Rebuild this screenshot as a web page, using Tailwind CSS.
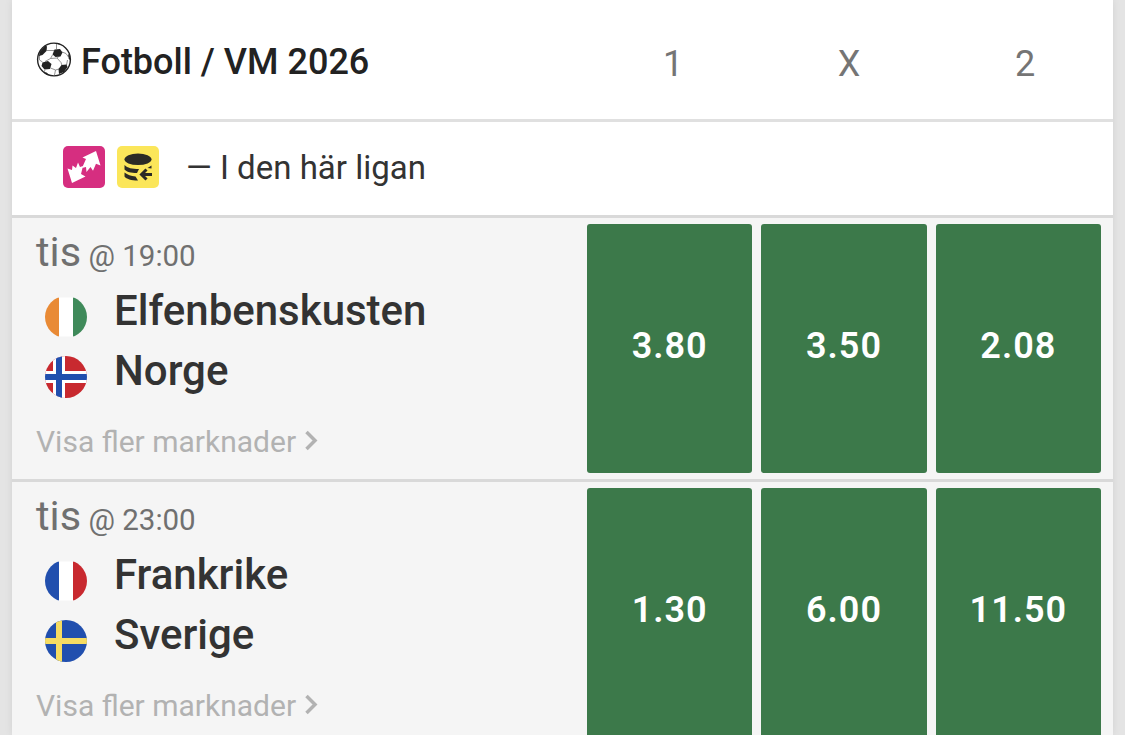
<!DOCTYPE html>
<html lang="sv">
<head>
    <meta charset="UTF-8" />
    <meta name="viewport" content="width=device-width, initial-scale=1.0" />
    <title>Fotboll / VM 2026</title>
    <script src="https://cdn.jsdelivr.net/npm/@tailwindcss/browser@4"></script>
</head>
<body class="bg-[#e4e4e4] font-['Roboto',sans-serif] overflow-hidden">
    <main class="mx-3 h-[735px] bg-white overflow-hidden shadow-[0_0_8px_rgba(0,0,0,0.08)]">
        <!-- League header -->
        <header class="flex items-center h-[122px] border-b-3 border-[#e0e0e0] pl-6">
            <svg class="w-9 h-9 shrink-0" viewBox="0 0 36 36">
                <circle cx="18" cy="17.500" r="16.400" fill="#fff" stroke="#222" stroke-width="1.400"/>
                <path fill="none" stroke="#777" stroke-width=".8" d="M20.500 7V2M10.500 8.500l8 0M16.500 13l-2 3.500-5.500 3M14.500 16.500l6.500-.500 2.500-2M21 16l4 4.500 1 3M14.500 26l5 2 3.500-1M26 10l4 1.500 2.500 3.500M3.500 13v5l3 2M30.500 23l1-5M9 28l-1 2M19.500 28l-1 5"/>
                <g fill="#222">
                    <path d="M16.500 12.500l2-5 5.500-.500 2.500 3.500-2 4-5 .500z"/>
                    <path d="M6.500 20.500l5.500-1.500 3.500 3-1.500 5-5.500.500-3-3.500z"/>
                    <path d="M22.500 27l3-4 5-.500 1 2.500-3.500 5-5 2z"/>
                    <path d="M9.500 3.500l1.500 1-.500 4.500-4 4-3.500 1 .5-4z"/>
                    <path d="M32 12l1.800 1.500.400 5-1.500-2z"/>
                    <path d="M18 1h5l1 1.500-3.500-.5z"/>
                    <path d="M7.500 30l3 .500 3.500 3-3-.500z"/>
                </g>
            </svg>
            <h1 class="ml-[9px] mt-1 text-4xl font-medium text-[#222]">Fotboll / VM 2026</h1>
            <div class="ml-auto mt-2 w-[528px] grid grid-cols-3 text-center text-4xl text-[#757575]">
                <span>1</span>
                <span>X</span>
                <span>2</span>
            </div>
        </header>

        <!-- Offers in this league -->
        <div class="flex items-center h-24 border-b-3 border-[#d9d9d9] pl-[51px]">
            <svg class="-mt-1 w-[42px] h-[42px]" viewBox="0 0 42 42">
                <rect width="42" height="42" rx="5" fill="#d62e80"/>
                <path fill="#fff" d="M19.500 11.500L33 5l4.500 14.500-4.500-1.800-3 7-2.500-3.700-4 5-.500-5-4 1 4-9z"/>
                <path fill="#fff" d="M4.500 22.500l4.500 1.500.500-4.500 3.500 2.500 2-5.500 2 4.500 3-1-2 8 4.500 2.500L9 37z"/>
            </svg>
            <svg class="-mt-1 ml-3 w-[42px] h-[42px]" viewBox="0 0 42 42">
                <rect width="42" height="42" rx="5" fill="#fbe65a"/>
                <g fill="#2b2a26">
                    <ellipse cx="21" cy="13.300" rx="13.500" ry="5.800"/>
                    <path d="M7.500 19c3 3 7.500 4 14.500 4l-2 4c-6 0-10.500-1-12.500-3.500z"/>
                    <path d="M7.500 26.500c3 2.500 6.500 3.500 11 4l2.500 4c-7 0-11.500-1.500-13.500-4z"/>
                    <path d="M30.500 22l4-2.500v3z"/>
                </g>
                <path d="M35 28.500H25M29.500 23.500l-5 5 5 5" fill="none" stroke="#2b2a26" stroke-width="3"/>
            </svg>
            <p class="-mt-0.5 ml-[27px] text-[33px] text-[#333]">— I den här ligan</p>
        </div>

        <!-- Event -->
        <section class="flex h-[264px] bg-[#f5f5f5] border-b-3 border-[#d9d9d9] pl-6 pr-3 pt-[3px]">
            <div class="w-[551px]">
                <p class="h-[60px] leading-[62px] text-[#707070] text-[29.500px]"><span class="text-[41.500px]">tis</span> @ 19:00</p>
                <div class="flex h-[60px] pl-[9px]">
                    <svg class="mt-[15px] w-[42px] h-[42px] rounded-full" viewBox="0 0 42 42">
                        <path fill="#e98a35" d="M0 1.500h14v39H0z"/>
                        <path fill="#fff" d="M14 1.500h14v39H14z"/>
                        <path fill="#3f8a5a" d="M28 1.500h14v39H28z"/>
                    </svg>
                    <span class="ml-[27px] text-[42px] leading-[60px] font-medium text-[#333]">Elfenbenskusten</span>
                </div>
                <div class="flex h-[60px] pl-[9px]">
                    <svg class="mt-[15px] w-[42px] h-[42px] rounded-full" viewBox="0 0 42 42">
                        <path fill="#c8292f" d="M0 0h42v42H0z"/>
                        <path fill="#fff" d="M8 0h12v42H8zM0 15h42v12H0z"/>
                        <path fill="#214fae" d="M11 0h6v42h-6zM0 18h42v6H0z"/>
                    </svg>
                    <span class="ml-[27px] text-[42px] leading-[60px] font-medium text-[#333]">Norge</span>
                </div>
                <a href="#" class="flex items-center h-20 text-[30px] text-[#b2b2b2]">Visa fler marknader
                    <svg class="ml-2 w-4 h-6" viewBox="0 0 16 24" fill="none" stroke="currentColor" stroke-width="3.500"><path d="M2.500 3l8.500 8.500-8.500 8.500"/></svg>
                </a>
            </div>
            <div class="w-[514px] h-[249px] mt-[3px] grid grid-cols-3 gap-[9px] text-4xl font-semibold text-white tracking-[1px]">
                <button class="bg-[#3c794a] rounded-[3px] pb-1.5">3.80</button>
                <button class="bg-[#3c794a] rounded-[3px] pb-1.5">3.50</button>
                <button class="bg-[#3c794a] rounded-[3px] pb-1.5">2.08</button>
            </div>
        </section>

        <!-- Event -->
        <section class="flex h-[264px] bg-[#f5f5f5] border-b-3 border-[#d9d9d9] pl-6 pr-3 pt-[3px]">
            <div class="w-[551px]">
                <p class="h-[60px] leading-[62px] text-[#707070] text-[29.500px]"><span class="text-[41.500px]">tis</span> @ 23:00</p>
                <div class="flex h-[60px] pl-[9px]">
                    <svg class="mt-[15px] w-[42px] h-[42px] rounded-full" viewBox="0 0 42 42">
                        <path fill="#214fae" d="M0 1.500h14v39H0z"/>
                        <path fill="#fff" d="M14 1.500h14v39H14z"/>
                        <path fill="#c8292f" d="M28 1.500h14v39H28z"/>
                    </svg>
                    <span class="ml-[27px] text-[42px] leading-[60px] font-medium text-[#333]">Frankrike</span>
                </div>
                <div class="flex h-[60px] pl-[9px]">
                    <svg class="mt-[15px] w-[42px] h-[42px] rounded-full" viewBox="0 0 42 42">
                        <path fill="#214fae" d="M0 0h42v42H0z"/>
                        <path fill="#f6dc62" d="M11 0h6v42h-6zM0 18h42v6H0z"/>
                    </svg>
                    <span class="ml-[27px] text-[42px] leading-[60px] font-medium text-[#333]">Sverige</span>
                </div>
                <a href="#" class="flex items-center h-20 text-[30px] text-[#b2b2b2]">Visa fler marknader
                    <svg class="ml-2 w-4 h-6" viewBox="0 0 16 24" fill="none" stroke="currentColor" stroke-width="3.500"><path d="M2.500 3l8.500 8.500-8.500 8.500"/></svg>
                </a>
            </div>
            <div class="w-[514px] h-[249px] mt-[3px] grid grid-cols-3 gap-[9px] text-4xl font-semibold text-white tracking-[1px]">
                <button class="bg-[#3c794a] rounded-[3px] pb-1.5">1.30</button>
                <button class="bg-[#3c794a] rounded-[3px] pb-1.5">6.00</button>
                <button class="bg-[#3c794a] rounded-[3px] pb-1.5">11.50</button>
            </div>
        </section>
    </main>
</body>
</html>
